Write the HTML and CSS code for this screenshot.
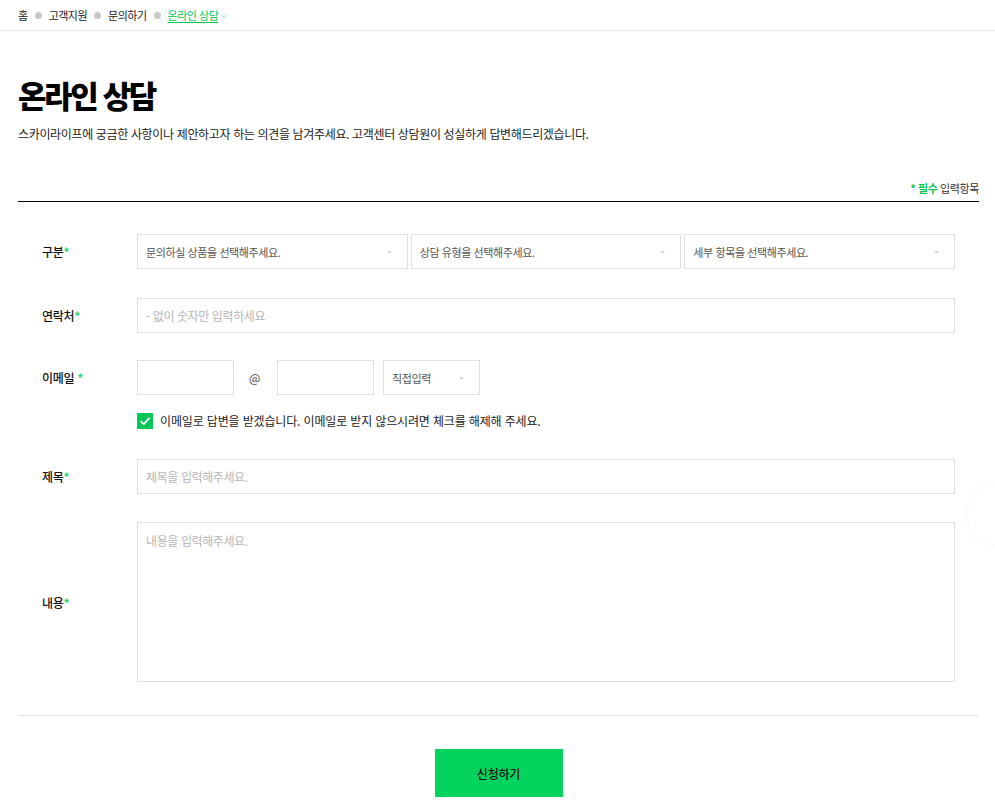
FILE: index.html
```html
<!DOCTYPE html>
<html lang="ko">
<head>
<meta charset="utf-8">
<title>온라인 상담</title>
<link rel="stylesheet" href="styles.css">
</head>
<body>
<nav class="crumbs">
  <span class="crumb">홈</span><span class="dot"></span>
  <span class="crumb">고객지원</span><span class="dot"></span>
  <span class="crumb">문의하기</span><span class="dot"></span>
  <span class="crumb current">온라인 상담</span><svg class="crumb-arrow" width="7" height="5" viewBox="0 0 7 5"><path d="M1 1.2 L3.5 3.6 L6 1.2" fill="none" stroke="#8ad9a8" stroke-width="1"/></svg>
</nav>
<main class="page">
  <h1 class="title">온라인 상담</h1>
  <p class="desc">스카이라이프에 궁금한 사항이나 제안하고자 하는 의견을 남겨주세요. 고객센터 상담원이 성실하게 답변해드리겠습니다.</p>
  <div class="req-note"><b>* 필수</b> 입력항목</div>
  <form class="form">
    <div class="row r1">
      <div class="label">구분<i>*</i></div>
      <div class="field selects">
        <div class="select">문의하실 상품을 선택해주세요.<span class="chev"></span></div>
        <div class="select">상담 유형을 선택해주세요.<span class="chev"></span></div>
        <div class="select">세부 항목을 선택해주세요.<span class="chev"></span></div>
      </div>
    </div>
    <div class="row r2">
      <div class="label">연락처<i>*</i></div>
      <div class="field"><div class="input ph">- 없이 숫자만 입력하세요</div></div>
    </div>
    <div class="row r3">
      <div class="label">이메일 <i>*</i></div>
      <div class="field email">
        <div class="input small"></div>
        <span class="at">@</span>
        <div class="input small"></div>
        <div class="select small">직접입력<span class="chev"></span></div>
      </div>
    </div>
    <div class="check-row">
      <span class="checkbox"><svg width="16" height="16" viewBox="0 0 16 16"><path d="M3.5 8.2 L6.7 11.2 L12.5 4.8" fill="none" stroke="#fff" stroke-width="1.8"/></svg></span>
      <span class="check-text">이메일로 답변을 받겠습니다. 이메일로 받지 않으시려면 체크를 해제해 주세요.</span>
    </div>
    <div class="row r4">
      <div class="label">제목<i>*</i></div>
      <div class="field"><div class="input ph">제목을 입력해주세요.</div></div>
    </div>
    <div class="row r5">
      <div class="label">내용<i>*</i></div>
      <div class="field"><div class="textarea ph">내용을 입력해주세요.</div></div>
    </div>
  </form>
  <div class="actions"><button type="button" class="submit">신청하기</button></div>
</main>
<div class="float-btn"></div>
</body>
</html>
```
FILE: styles.css
```css
* { box-sizing: border-box; }
html, body { margin: 0; padding: 0; background: #fff; }
body {
  font-family: "Noto Sans CJK KR", "Noto Sans", sans-serif;
  color: #111;
  overflow: hidden;
  height: 806px;
}
.crumbs {
  height: 31px;
  border-bottom: 1px solid #e4e4e4;
  display: flex;
  align-items: center;
  padding: 0 0 0 18px;
  font-size: 11px;
  letter-spacing: -0.5px;
  color: #222;
}
.crumb { line-height: 14px; }
.dot {
  width: 7px; height: 7px; border-radius: 50%;
  background: #c8c8c8;
  margin: 0 7px 0 7px;
}
.crumb.current { color: #06c755; text-decoration: underline; text-underline-offset: 2px; }
.crumb-arrow { margin-left: 3px; margin-top: 2px; }
.page { padding: 0 16px 0 18px; }
.title {
  margin: 44px 0 0;
  font-size: 31px;
  font-weight: 900;
  letter-spacing: -2.4px;
  line-height: 40px;
  color: #000;
}
.desc {
  margin: 10px 0 0;
  font-size: 12px;
  letter-spacing: -0.35px;
  line-height: 18px;
  color: #222;
}
.req-note {
  margin-top: 38px;
  text-align: right;
  font-size: 11px;
  letter-spacing: -0.4px;
  line-height: 14px;
  padding-bottom: 6px;
  border-bottom: 1px solid #000;
  color: #333;
}
.req-note b { color: #06c755; font-weight: 700; }
.form {
  padding: 0 24px;
  border-bottom: 1px solid #e3e3e3;
  padding-bottom: 33px;
}
.row { display: flex; align-items: center; }
.label {
  width: 95px;
  flex: none;
  font-size: 12px;
  font-weight: 500;
  letter-spacing: -0.3px;
  color: #111;
}
.label i { font-style: normal; color: #2fd36f; font-weight: 700; }
.field { flex: 1; }
.r1 { margin-top: 32px; }
.r2 { margin-top: 29px; }
.r3 { margin-top: 27px; }
.r4 { margin-top: 30px; }
.r5 { margin-top: 28px; }
.selects { display: grid; grid-template-columns: 1fr 1fr 1fr; gap: 3px; }
.select, .input, .textarea {
  border: 1px solid #e0e0e0;
  height: 35px;
  font-size: 11px;
  letter-spacing: -0.4px;
  color: #555;
  display: flex;
  align-items: center;
  padding: 0 8px;
  position: relative;
}
.input.ph, .textarea.ph { font-size: 12px; color: #b5b5b5; }
.textarea { height: 160px; align-items: flex-start; padding-top: 9px; }
.chev {
  position: absolute;
  right: 16px; top: 15px;
  width: 3px; height: 3px;
  border-right: 1px solid #c4c4c4;
  border-bottom: 1px solid #c4c4c4;
  transform: rotate(45deg);
}
.email { display: flex; align-items: center; }
.input.small { width: 97px; flex: none; }
.at { width: 43px; flex: none; font-size: 12px; color: #444; padding-left: 15px; }
.select.small { width: 97px; flex: none; margin-left: 9px; }
.check-row {
  display: flex; align-items: center;
  margin: 17px 0 0 95px;
}
.checkbox {
  width: 16px; height: 16px;
  background: #06c755;
  display: flex;
}
.check-text {
  margin-left: 7px;
  font-size: 12px;
  letter-spacing: -0.15px;
  color: #222;
}
.actions { display: flex; justify-content: center; padding-top: 33px; }
.submit {
  width: 128px; height: 48px;
  background: #04d35e;
  border: 0;
  font-family: inherit;
  font-size: 12px;
  font-weight: 500;
  color: #111;
  letter-spacing: -0.2px;
}
.float-btn {
  position: absolute;
  left: 968px; top: 486px;
  width: 58px; height: 58px;
  border-radius: 50%;
  background: #fff;
  box-shadow: 0 0 8px rgba(0,0,0,0.04);
}
```
